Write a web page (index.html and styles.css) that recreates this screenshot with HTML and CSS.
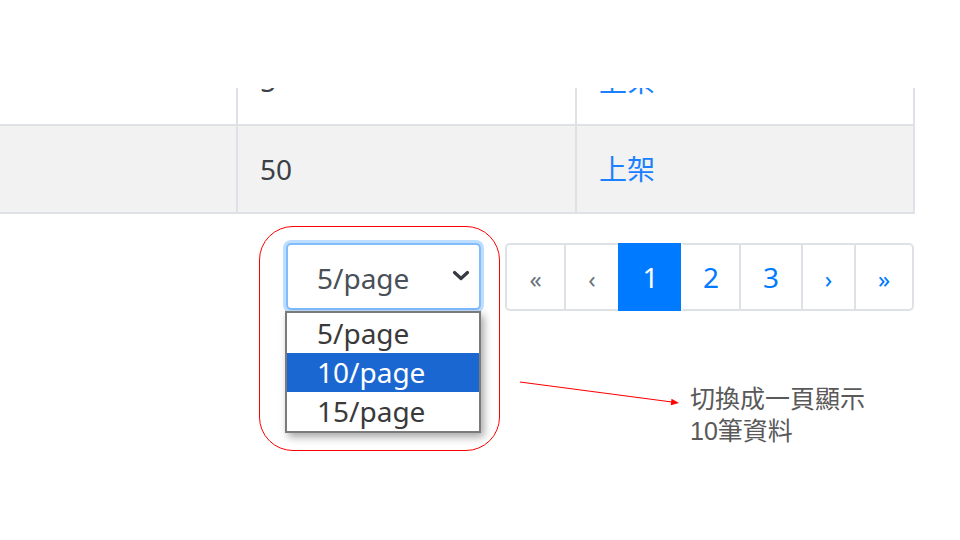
FILE: index.html
```html
<!DOCTYPE html>
<html lang="zh-Hant">
<head>
<meta charset="utf-8">
<title>Pagination page size</title>
<link rel="stylesheet" href="styles.css">
</head>
<body>
<div class="page">
  <div class="table-clip">
    <table class="grid">
      <colgroup><col class="c1"><col class="c2"><col class="c3"></colgroup>
      <tbody>
        <tr><td></td><td>5</td><td><a href="#" class="link">上架</a></td></tr>
        <tr class="shaded"><td></td><td>50</td><td><a href="#" class="link">上架</a></td></tr>
      </tbody>
    </table>
  </div>
  <div class="controls">
    <div class="size-picker">
      <div class="select">
        <span class="select-value">5/page</span>
        <svg class="chev" width="18" height="12" viewBox="0 0 18 12"><path d="M2.5 2.5 L9 8.5 L15.5 2.5" fill="none" stroke="#343a40" stroke-width="3.2" stroke-linecap="round" stroke-linejoin="round"/></svg>
      </div>
      <ul class="options">
        <li>5/page</li>
        <li class="hl">10/page</li>
        <li>15/page</li>
      </ul>
      <div class="callout"></div>
    </div>
    <nav class="pager">
      <a class="pg pg-first disabled arrowish">«</a>
      <a class="pg pg-prev disabled arrowish">‹</a>
      <a class="pg pg-n1 active">1</a>
      <a class="pg pg-n2">2</a>
      <a class="pg pg-n3">3</a>
      <a class="pg pg-next arrowish">›</a>
      <a class="pg pg-last arrowish">»</a>
    </nav>
  </div>
  <svg class="arrow" width="172" height="36" viewBox="0 0 172 36">
    <line x1="5" y1="7" x2="157" y2="27" stroke="#ff0000" stroke-width="1.2"/>
    <polygon points="164,28 155.7,30.2 156.5,23.8" fill="#ff0000"/>
  </svg>
  <p class="note">切換成一頁顯示<br>10筆資料</p>
</div>
</body>
</html>
```
FILE: styles.css
```css
* { box-sizing: border-box; }
body {
  margin: 0;
  background: #fff;
  font-family: "Noto Sans", "Noto Sans CJK TC", sans-serif;
}
.page {
  position: relative;
  width: 960px;
  height: 540px;
  overflow: hidden;
  padding-top: 88px;
}
.table-clip {
  width: 915px;
  height: 126px;
  overflow: hidden;
}
.grid {
  margin: -52px 0 0 -100px;
  width: 1015px;
  table-layout: fixed;
  border-collapse: separate;
  border-spacing: 0;
  font-size: 28px;
  line-height: 42px;
  color: #3b4046;
}
.c1 { width: 336px; }
.c2 { width: 339px; }
.c3 { width: 340px; }
.grid td {
  padding: 22px;
  border-top: 2px solid #dee2e6;
  border-left: 2px solid #dee2e6;
}
.grid td:last-child { border-right: 2px solid #dee2e6; }
.grid tr:last-child td { border-bottom: 2px solid #dee2e6; }
.shaded td { background: #f2f2f2; }
.link { color: #1a80ff; text-decoration: none; }

.controls {
  display: flex;
  justify-content: flex-end;
  align-items: flex-start;
  gap: 24px;
  width: 914px;
  margin-top: 29px;
}
.size-picker { position: relative; }
.select {
  width: 195px;
  height: 67px;
  border: 2px solid #80bdff;
  border-radius: 5px;
  box-shadow: 0 0 0 3px rgba(0, 123, 255, 0.25);
  background: #fff;
  display: flex;
  align-items: center;
  justify-content: space-between;
  padding: 0 9px 0 29px;
  font-size: 28px;
  color: #495057;
}
.select-value { padding-top: 3px; }
.chev { display: block; margin-top: -2px; }
.options {
  position: absolute;
  left: -1px;
  top: 68px;
  width: 196px;
  margin: 0;
  padding: 0;
  list-style: none;
  border: 2px solid #7b7b7b;
  background: #fff;
  box-shadow: 3px 4px 8px rgba(0, 0, 0, 0.35);
  font-size: 28px;
  color: #3a3a3a;
  z-index: 2;
}
.options li {
  height: 39px;
  line-height: 39px;
  padding-left: 30px;
}
.options li:first-child { height: 40px; padding-top: 1px; }
.options .hl { background: #1a67d2; color: #fff; }
.callout {
  position: absolute;
  left: -27px;
  top: -17px;
  width: 241px;
  height: 225px;
  border: 1px solid #ff0000;
  border-radius: 34px;
  pointer-events: none;
}

.pager { display: flex; height: 68px; }
.pg {
  display: flex;
  align-items: center;
  justify-content: center;
  border: 2px solid #dee2e6;
  border-right: none;
  font-size: 28px;
  color: #007bff;
  background: #fff;
}
.pg.arrowish { font-size: 24px; padding-top: 2px; }
.pg-first { width: 59px; border-radius: 5px 0 0 5px; }
.pg-prev { width: 54px; }
.pg-n1 { width: 63px; }
.pg-n2 { width: 58px; }
.pg-n3 { width: 62px; }
.pg-next { width: 53px; }
.pg-last { width: 60px; border-right: 2px solid #dee2e6; border-radius: 0 5px 5px 0; }
.pg.disabled { color: #6c757d; }
.pg.active { background: #007bff; border-color: #007bff; color: #fff; }
.pg.active + .pg { border-left-color: transparent; }

.arrow {
  position: absolute;
  left: 515px;
  top: 375px;
}
.note {
  position: absolute;
  left: 690px;
  top: 383px;
  margin: 0;
  font-family: "Liberation Sans", "Noto Sans CJK TC", sans-serif;
  font-size: 25px;
  line-height: 32px;
  color: #595959;
}
```
